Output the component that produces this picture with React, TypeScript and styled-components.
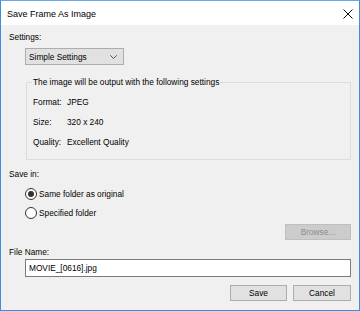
import styled, { createGlobalStyle } from "styled-components";

const GlobalStyle = createGlobalStyle`
  html, body {
    margin: 0;
    padding: 0;
    background: #ffffff;
  }
  * {
    box-sizing: border-box;
  }
`;

const Window = styled.div`
  width: 360px;
  height: 311px;
  display: flex;
  flex-direction: column;
  border: 1px solid #3d8ee0;
  border-top-color: #6aa8e6;
  font-family: "Liberation Sans", Arial, sans-serif;
  font-size: 8.3px;
  color: #000000;
  background: #f0f0f0;
`;

const TitleBar = styled.div`
  height: 24px;
  flex: none;
  display: flex;
  align-items: center;
  justify-content: space-between;
  padding: 0 6px 0 6px;
  background: #ffffff;
`;

const Title = styled.span`
  font-size: 9px;
  margin-top: 1px;
`;

const CloseIcon = styled.svg`
  width: 10px;
  height: 10px;
  margin-right: 0px;
  margin-top: 1px;
`;

const Body = styled.div`
  flex: 1;
  display: flex;
  flex-direction: column;
  padding: 0 8px;
`;

const Label = styled.div<{ $top: number }>`
  height: 13px;
  line-height: 13px;
  margin-top: ${(p) => p.$top}px;
`;

const DropDown = styled.div`
  width: 99px;
  height: 17px;
  margin: 4px 0 0 16px;
  padding: 0 4px 0 3px;
  display: flex;
  align-items: center;
  justify-content: space-between;
  background: #e1e1e1;
  border: 1px solid #adadad;
`;

const Chevron = styled.svg`
  width: 7px;
  height: 4px;
  margin-right: 2px;
`;

const GroupBox = styled.fieldset`
  margin: 12px 0 0 17px;
  padding: 5px 0 7px 5px;
  border: 1px solid #dcdcdc;
  min-width: 0;
`;

const Legend = styled.legend`
  padding: 0 1px;
  height: 10px;
  line-height: 10px;
`;

const InfoRow = styled.div`
  display: grid;
  grid-template-columns: 34px auto;
  height: 20px;
  line-height: 20px;
  padding-left: 1px;
`;

const RadioRow = styled.label`
  display: flex;
  align-items: center;
  gap: 2px;
  height: 19px;
  margin-left: 16px;
`;

const RadioCircle = styled.span<{ $checked?: boolean }>`
  width: 12px;
  height: 12px;
  border-radius: 50%;
  border: 1px solid #333333;
  background: #ffffff;
  display: flex;
  align-items: center;
  justify-content: center;
  &::after {
    content: "";
    width: 6px;
    height: 6px;
    border-radius: 50%;
    background: ${(p) => (p.$checked ? "#333333" : "transparent")};
  }
`;

const RadioGroup = styled.div`
  margin-top: 3px;
  display: flex;
  flex-direction: column;
`;

const RightRow = styled.div<{ $top: number }>`
  display: flex;
  justify-content: flex-end;
  gap: 6px;
  margin-top: ${(p) => p.$top}px;
`;

const Button = styled.button<{ $width: number; $disabled?: boolean }>`
  width: ${(p) => p.$width}px;
  height: 16px;
  padding: 0;
  font-family: inherit;
  font-size: inherit;
  line-height: 14px;
  color: ${(p) => (p.$disabled ? "#8d8d8d" : "#000000")};
  background: ${(p) => (p.$disabled ? "#cccccc" : "#e1e1e1")};
  border: 1px solid ${(p) => (p.$disabled ? "#bfbfbf" : "#adadad")};
  border-radius: 0;
`;

const TextInput = styled.div`
  height: 18px;
  margin-left: 16px;
  padding: 0 3px;
  line-height: 16px;
  background: #ffffff;
  border: 1px solid #7a7a7a;
`;

export default function App() {
  return (
    <>
      <GlobalStyle />
      <Window>
        <TitleBar>
          <Title>Save Frame As Image</Title>
          <CloseIcon viewBox="0 0 10 10">
            <path d="M0.5 0.5 L9.5 9.5 M9.5 0.5 L0.5 9.5" stroke="#111" strokeWidth="1" fill="none" />
          </CloseIcon>
        </TitleBar>
        <Body>
          <Label $top={6}>Settings:</Label>
          <DropDown>
            <span>Simple Settings</span>
            <Chevron viewBox="0 0 7 4">
              <polyline points="0.3,0.3 3.5,3.5 6.7,0.3" stroke="#555" strokeWidth="1" fill="none" />
            </Chevron>
          </DropDown>
          <GroupBox>
            <Legend>The image will be output with the following settings</Legend>
            <InfoRow>
              <span>Format:</span>
              <span>JPEG</span>
            </InfoRow>
            <InfoRow>
              <span>Size:</span>
              <span>320 x 240</span>
            </InfoRow>
            <InfoRow>
              <span>Quality:</span>
              <span>Excellent Quality</span>
            </InfoRow>
          </GroupBox>
          <Label $top={8}>Save in:</Label>
          <RadioGroup>
            <RadioRow>
              <RadioCircle $checked />
              <span>Same folder as original</span>
            </RadioRow>
            <RadioRow>
              <RadioCircle />
              <span>Specified folder</span>
            </RadioRow>
          </RadioGroup>
          <RightRow $top={2}>
            <Button $width={66} $disabled>
              Browse...
            </Button>
          </RightRow>
          <Label $top={6}>File Name:</Label>
          <TextInput>MOVIE_[0616].jpg</TextInput>
          <RightRow $top={8}>
            <Button $width={57}>Save</Button>
            <Button $width={58}>Cancel</Button>
          </RightRow>
        </Body>
      </Window>
    </>
  );
}
